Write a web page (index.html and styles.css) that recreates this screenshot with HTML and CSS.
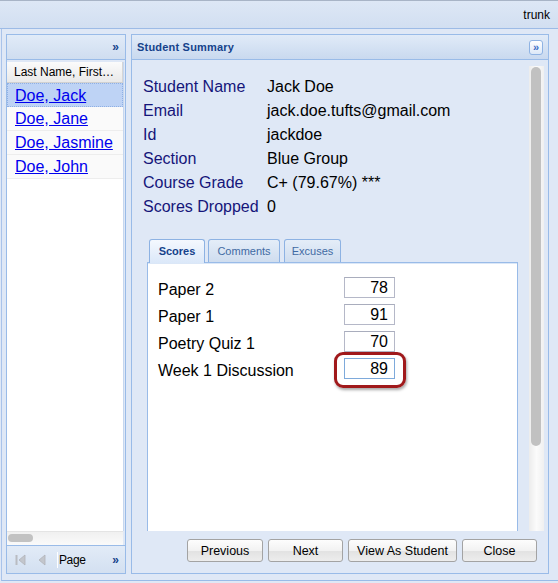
FILE: index.html
```html
<!DOCTYPE html>
<html>
<head>
<meta charset="utf-8">
<link rel="stylesheet" href="styles.css">
</head>
<body>
<div class="topbar"><span class="user">trunk</span></div>
<div class="workspace">
  <section class="left-panel">
    <div class="lp-head"><span class="dbl">»</span></div>
    <div class="lp-body">
      <div class="grid">
        <div class="colhead">Last Name, First…</div>
        <div class="row selected"><a href="#">Doe, Jack</a></div>
        <div class="row"><a href="#">Doe, Jane</a></div>
        <div class="row"><a href="#">Doe, Jasmine</a></div>
        <div class="row"><a href="#">Doe, John</a></div>
      </div>
      <div class="hscroll"><div class="hthumb"></div></div>
    </div>
    <div class="lp-toolbar">
      <svg class="ico first" width="11" height="12" viewBox="0 0 11 12"><rect x="0.5" y="1" width="2" height="10" fill="#b9bcc2"/><path d="M10 1 L4 6 L10 11 Z" fill="#c3c6cc" stroke="#b0b3b9" stroke-width="0.8"/></svg>
      <svg class="ico prev" width="8" height="12" viewBox="0 0 8 12"><path d="M7 1 L1 6 L7 11 Z" fill="#c3c6cc" stroke="#b0b3b9" stroke-width="0.8"/></svg>
      <span class="sep"></span>
      <span class="page">Page</span>
      <span class="dbl tb">»</span>
    </div>
  </section>

  <section class="right-panel">
    <div class="rp-head">
      <span class="title">Student Summary</span>
      <span class="hbtn">»</span>
    </div>
    <div class="rp-body">
      <div class="rp-top">
        <div class="rp-content">
          <div class="summary">
            <div class="lbl">Student Name</div><div class="val">Jack Doe</div>
            <div class="lbl">Email</div><div class="val">jack.doe.tufts@gmail.com</div>
            <div class="lbl">Id</div><div class="val">jackdoe</div>
            <div class="lbl">Section</div><div class="val">Blue Group</div>
            <div class="lbl">Course Grade</div><div class="val">C+ (79.67%) ***</div>
            <div class="lbl">Scores Dropped</div><div class="val">0</div>
          </div>
          <div class="tabs">
            <div class="tabstrip">
              <div class="tab active t1">Scores</div>
              <div class="tab t2">Comments</div>
              <div class="tab t3">Excuses</div>
            </div>
            <div class="tabpanel">
              <div class="scores">
                <div class="slbl">Paper 2</div><div class="cell"><input class="score" value="78" readonly></div>
                <div class="slbl">Paper 1</div><div class="cell"><input class="score" value="91" readonly></div>
                <div class="slbl">Poetry Quiz 1</div><div class="cell"><input class="score" value="70" readonly></div>
                <div class="slbl">Week 1 Discussion</div><div class="cell"><input class="score focus" value="89" readonly><span class="ring"></span></div>
              </div>
            </div>
          </div>
        </div>
        <div class="vscroll"><div class="vthumb"></div></div>
      </div>
      <div class="buttons">
        <button class="btn b-prev">Previous</button>
        <button class="btn b-next">Next</button>
        <button class="btn b-view">View As Student</button>
        <button class="btn b-close">Close</button>
      </div>
    </div>
  </section>
</div>
</body>
</html>
```

FILE: styles.css
```css
* { box-sizing: border-box; }

body {
  margin: 0;
  width: 558px;
  height: 583px;
  overflow: hidden;
  background: #dfe8f6;
  font-family: "Liberation Sans", Arial, sans-serif;
}

.topbar {
  height: 29px;
  border-top: 1px solid #a8b4c6;
  border-bottom: 1px solid #9dbbe6;
  background: linear-gradient(#dde7f5, #d2dff1);
  display: flex;
  justify-content: flex-end;
  align-items: center;
  padding-right: 8px;
  font-size: 12px;
  color: #000;
}

.workspace {
  display: flex;
  gap: 5px;
  height: 552px;
  margin-left: 1px;
  padding: 5px 0 0 4px;
  border-left: 1px solid #a9c3ea;
  border-bottom: 1px solid #99bbe8;
}

/* ---------- left panel ---------- */
.left-panel {
  width: 120px;
  height: 540px;
  border: 1px solid #99bbe8;
  display: flex;
  flex-direction: column;
  background: #dfe8f6;
}

.lp-head {
  height: 25px;
  flex: none;
  border-bottom: 1px solid #99bbe8;
  background: linear-gradient(#e1ebf8, #cfddf0);
  display: flex;
  justify-content: flex-end;
  align-items: center;
  padding-right: 6px;
}

.dbl {
  color: #15428b;
  font-weight: bold;
  font-size: 12px;
  line-height: 12px;
}

.lp-body {
  flex: 1;
  display: flex;
  flex-direction: column;
  padding-top: 2px;
}

.grid {
  flex: 1;
  background: #fff;
  margin-right: 1px;
  border-right: 1px solid #c6d7ef;
}

.colhead {
  height: 21px;
  line-height: 20px;
  padding-left: 7px;
  font-size: 12px;
  color: #000;
  white-space: nowrap;
  overflow: hidden;
  background: linear-gradient(#fbfbfb, #e9e9e9);
  border-bottom: 1px solid #d0d0d0;
  border-right: 1px solid #d6d6d6;
}

.row {
  height: 24px;
  line-height: 24px;
  padding-left: 8px;
  font-size: 16px;
  background: #fafafa;
  border-bottom: 1px solid #ededed;
}

.row a {
  color: #0000ee;
  text-decoration: underline;
}

.row.selected {
  background: #bed3f5;
  border: 1px dotted #8fb0e4;
  padding-left: 7px;
  line-height: 23px;
}

.hscroll {
  height: 14px;
  flex: none;
  margin-right: 2px;
  background: linear-gradient(#f0f0f0, #fafafa);
  border-top: 1px solid #e4e4e4;
  padding: 2px 0 0 1px;
}

.hthumb {
  width: 25px;
  height: 8px;
  border-radius: 4px;
  background: #c2c2c2;
}

.lp-toolbar {
  height: 28px;
  flex: none;
  border-top: 1px solid #99bbe8;
  background: linear-gradient(#e2ebf7, #d3e0f1);
  display: flex;
  align-items: center;
  padding-left: 8px;
}

.ico.first { margin-right: 12px; }
.ico.prev { margin-right: 11px; }

.sep {
  width: 1px;
  height: 16px;
  background: #a9c6f0;
  border-right: 1px solid #fff;
  margin-right: 1px;
}

.page {
  font-size: 12px;
  letter-spacing: -0.4px;
  color: #000;
}

.dbl.tb {
  margin-left: auto;
  margin-right: 6px;
}

/* ---------- right panel ---------- */
.right-panel {
  width: 418px;
  height: 540px;
  border: 1px solid #99bbe8;
  display: flex;
  flex-direction: column;
}

.rp-head {
  height: 25px;
  flex: none;
  border-bottom: 1px solid #99bbe8;
  background: linear-gradient(#e1ebf8 0%, #d6e3f4 45%, #c9d9ef 100%);
  display: flex;
  justify-content: space-between;
  align-items: center;
  padding: 0 5px 0 5px;
}

.title {
  font-weight: bold;
  font-size: 11px;
  color: #15428b;
  letter-spacing: 0.2px;
}

.hbtn {
  width: 14px;
  height: 15px;
  border: 1px solid #8fb3e3;
  border-radius: 3px;
  background: linear-gradient(#ffffff, #dce8f8);
  color: #3b6cc4;
  font-size: 11px;
  font-weight: bold;
  line-height: 12px;
  text-align: center;
}

.rp-body {
  flex: 1;
  display: flex;
  flex-direction: column;
}

.rp-top {
  height: 471px;
  display: flex;
}

.rp-content {
  flex: 1;
  display: flex;
  flex-direction: column;
}

.summary {
  display: grid;
  grid-template-columns: 124px auto;
  padding: 15px 0 0 11px;
  font-size: 16px;
  line-height: 24px;
}

.lbl { color: #15157a; }
.val { color: #000; }

.tabs {
  flex: 1;
  display: flex;
  flex-direction: column;
  margin: 20px 11px 0 15px;
}

.tabstrip {
  display: flex;
  gap: 3px;
  padding-left: 2px;
  height: 23px;
  flex: none;
}

.tab {
  height: 23px;
  border: 1px solid #8db2e3;
  border-bottom: none;
  border-radius: 3px 3px 0 0;
  font-size: 11px;
  line-height: 22px;
  text-align: center;
  color: #416aa3;
  background: linear-gradient(#e4edf8, #cfddef);
}

.tab.active {
  color: #15428b;
  font-weight: bold;
  background: linear-gradient(#f4f8fe, #dbe8f9);
  height: 24px;
  position: relative;
  z-index: 1;
}

.t1 { width: 56px; }
.t2 { width: 72px; }
.t3 { width: 57px; margin-left: 1px; }

.tabpanel {
  flex: 1;
  background: #fff;
  border: 1px solid #99bbe8;
  border-bottom: none;
  box-shadow: inset 0 1px 0 #dbe7f7;
  padding: 14px 0 0 10px;
}

.scores {
  display: grid;
  grid-template-columns: 186px 51px;
  grid-auto-rows: 21px;
  row-gap: 6px;
}

.slbl {
  height: 21px;
  font-size: 16px;
  line-height: 26px;
  color: #000;
}

.cell {
  position: relative;
  height: 21px;
}

.score {
  display: block;
  width: 51px;
  height: 21px;
  margin: 0;
  border: 1px solid #b5b8c8;
  border-top-color: #a9adbd;
  background: #fff;
  font-family: "Liberation Sans", Arial, sans-serif;
  font-size: 16px;
  color: #000;
  text-align: right;
  padding: 0 6px 0 0;
  outline: none;
}

.score.focus {
  border-color: #7eaadb;
}

.ring {
  position: absolute;
  left: -10px;
  top: -6px;
  width: 72px;
  height: 36px;
  border: 3px solid #a0191b;
  border-radius: 9px;
  box-shadow: 1px 2px 3px rgba(0, 0, 0, 0.35);
}

.vscroll {
  width: 15px;
  margin: 6px 4px 0 0;
  background: linear-gradient(90deg, #ececec, #fbfbfb 50%, #f0f0f0);
  padding: 1px 0 0 2px;
}

.vthumb {
  width: 10px;
  height: 379px;
  border-radius: 5px;
  background: #c1c1c1;
}

.buttons {
  display: flex;
  justify-content: flex-end;
  gap: 5px;
  padding: 8px 11px 0 0;
}

.btn {
  height: 23px;
  margin: 0;
  padding: 0;
  border: 1px solid #a3a3a3;
  border-radius: 3px;
  background: linear-gradient(#fdfdfd 0%, #f2f2f2 50%, #e2e2e2 52%, #ededed 100%);
  font-family: "Liberation Sans", Arial, sans-serif;
  font-size: 12.5px;
  line-height: 23px;
  color: #000;
  text-align: center;
}

.b-prev { width: 76px; }
.b-next { width: 75px; }
.b-view { width: 109px; }
.b-close { width: 75px; }
```
